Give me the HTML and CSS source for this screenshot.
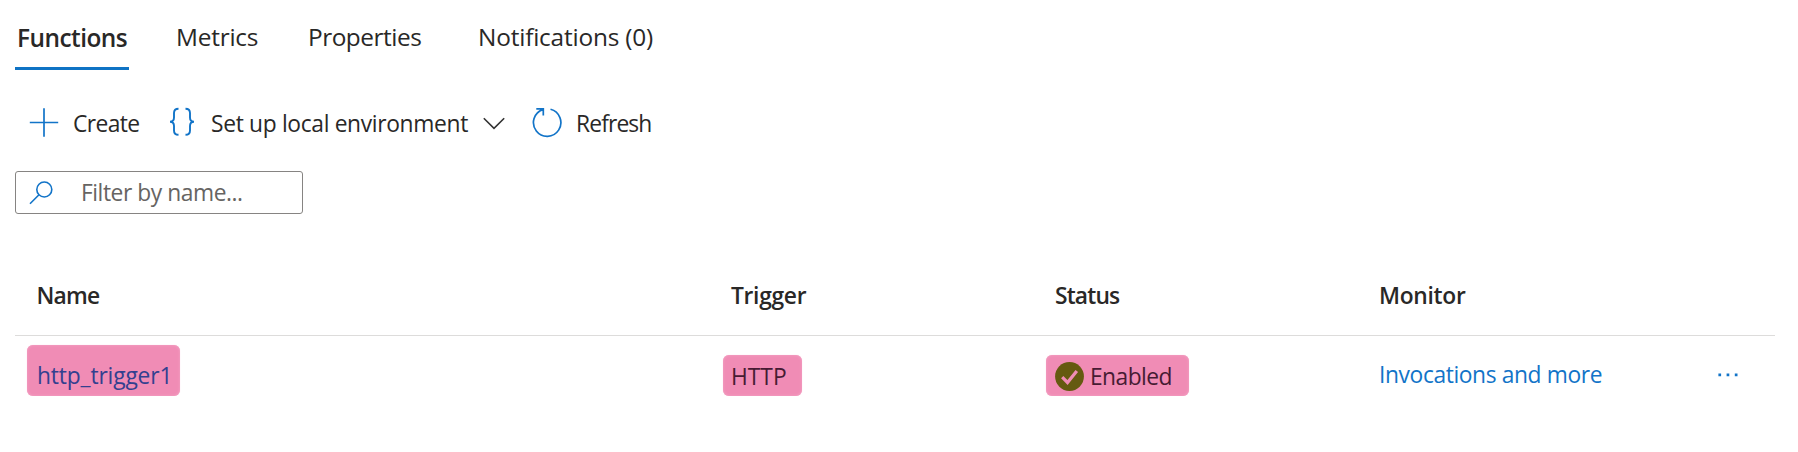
FILE: index.html
```
<!DOCTYPE html>
<html lang="en">
<head>
<meta charset="utf-8">
<title>Functions</title>
<link rel="stylesheet" href="styles.css">
</head>
<body>
<main class="page">
  <nav class="tabs">
    <a class="tab tab-active">Functions</a>
    <a class="tab tab-metrics">Metrics</a>
    <a class="tab tab-properties">Properties</a>
    <a class="tab tab-notifications">Notifications (0)</a>
  </nav>
  <div class="toolbar">
    <button class="command create">
      <svg class="icon" width="30" height="30" viewBox="0 0 30 30"><path d="M15 .3V28.700M.8 14.500H29.200" stroke-width="1.700"/></svg>
      <span>Create</span>
    </button>
    <button class="command setup">
      <svg class="icon" width="26" height="30" viewBox="0 0 26 30"><path d="M9.500 1.700C6 1.700 5 3.300 5 6v4.500C5 13 4 14.700 1 14.700c3 0 4 1.700 4 4.300v4.500c0 2.700 1 4.300 4.500 4.300M16.500 1.700C20 1.700 21 3.300 21 6v4.500c0 2.500 1 4.200 4 4.200-3 0-4 1.700-4 4.300v4.500c0 2.700-1 4.300-4.500 4.300" stroke-width="1.900"/></svg>
      <span>Set up local environment</span>
      <svg class="chevron" width="22" height="13" viewBox="0 0 22 13"><path d="M.8 1.200 11 11.300 21.200 1.200" stroke-width="1.600"/></svg>
    </button>
    <button class="command refresh">
      <svg class="icon" width="30" height="30" viewBox="0 0 30 30"><path d="M18.500 1.300A13.700 13.700 0 1 1 10.800 1.600M4.300 .9h7v6.600" stroke-width="1.700"/></svg>
      <span>Refresh</span>
    </button>
  </div>
  <div class="filter">
    <svg class="icon" width="24" height="24" viewBox="0 0 24 24"><circle cx="15.300" cy="8.500" r="7.500" stroke-width="1.600"/><path d="M10 13.800 1 22.800" stroke-width="1.600"/></svg>
    <span>Filter by name...</span>
  </div>
  <section class="table">
    <div class="row header">
      <div class="h-name">Name</div>
      <div class="h-trigger">Trigger</div>
      <div class="h-status">Status</div>
      <div class="h-monitor">Monitor</div>
    </div>
    <div class="row body">
      <div class="mark mark-name"><a>http_trigger1</a></div>
      <div class="mark mark-trigger">HTTP</div>
      <div class="mark mark-status">
        <svg width="29" height="29" viewBox="0 0 29 29"><circle cx="14.500" cy="14.500" r="14.400" fill="#655a10"/><path d="M7.200 15.200 12.500 20.500 21.800 9" fill="none" stroke="#f08cb5" stroke-width="3.200"/></svg>
        <span>Enabled</span>
      </div>
      <div class="monitor">
        <a>Invocations and more</a>
        <svg width="20" height="4" viewBox="0 0 20 4"><path d="M.4.500h2.700v2.700H.400zM8.600.500h2.700v2.700H8.600zM16.800.500h2.700v2.700h-2.700z" fill="#1274c8"/></svg>
      </div>
    </div>
  </section>
</main>
</body>
</html>
```
FILE: styles.css
```
body {
  margin: 0;
  background: #fff;
  color: #292827;
  font: 22.8px/30px "Open Sans", "Noto Sans", sans-serif;
}
.page { padding: 0 23px 0 15px; }
svg { flex: none; display: block; }
.icon { fill: none; stroke: #1274c8; }

.tabs { display: flex; height: 70px; font-size: 24.4px; }
.tab {
  box-sizing: border-box;
  height: 70px;
  padding-top: 22px;
  letter-spacing: -.23px;
  white-space: nowrap;
}
.tab-active {
  width: 114px;
  margin-right: 47px;
  padding-top: 23px;
  padding-left: 2px;
  border-bottom: 3px solid #0f73c4;
  font-weight: 600;
  letter-spacing: -.52px;
}
.tab-metrics { width: 132px; }
.tab-properties { width: 170px; letter-spacing: -.48px; }
.tab-notifications { letter-spacing: -.19px; }

.toolbar { display: flex; height: 40px; margin-top: 33px; padding-left: 14px; }
.command {
  display: flex;
  align-items: center;
  padding: 0;
  border: 0;
  background: none;
  color: inherit;
  font: inherit;
  white-space: nowrap;
}
.command span { padding-top: 2px; }
.create { width: 140px; letter-spacing: -.58px; gap: 14px; }
.setup { width: 363px; letter-spacing: -.33px; }
.setup .icon { margin: 0 16px 3px 0; }
.chevron { margin-left: auto; margin-right: 27px; fill: none; stroke: #333; }
.refresh { gap: 14px; letter-spacing: -.87px; }

.filter {
  box-sizing: border-box;
  display: flex;
  align-items: center;
  width: 288px;
  height: 43px;
  margin-top: 28px;
  padding-left: 13px;
  gap: 28px;
  border: 1px solid #868482;
  border-radius: 3px;
  color: #666462;
  letter-spacing: -.45px;
}
.filter span { padding-top: 1px; }

.table { margin-top: 41px; }
.row { display: grid; grid-template-columns: 708px 323px 324px 405px; }
.header {
  box-sizing: border-box;
  height: 81px;
  padding-top: 2px;
  align-items: center;
  border-bottom: 1px solid #dddcdb;
  font-weight: 600;
}
.h-name { padding-left: 21.5px; letter-spacing: -.75px; }
.h-trigger { padding-left: 8px; letter-spacing: -.3px; }
.h-status { padding-left: 9px; letter-spacing: -.85px; }
.h-monitor { padding-left: 9px; letter-spacing: -.3px; }

.body { height: 60px; align-items: end; }
.mark {
  box-sizing: border-box;
  height: 41px;
  padding: 7px 8px 4px;
  border-radius: 6px;
  background: #f08cb5;
  box-shadow: inset 0 0 3px #f4a8c7, 0 0 1px #f8c4d9;
  color: #461b33;
}
.mark-name {
  width: 153px;
  height: 51px;
  margin-left: 12px;
  padding: 16px 9px 5px 10px;
  color: #33408f;
  letter-spacing: -.15px;
}
.mark-trigger { width: 79px; letter-spacing: 0; }
.mark-status {
  display: flex;
  align-items: center;
  gap: 6px;
  width: 143px;
  padding: 5px 9px 4px;
  letter-spacing: -.55px;
}
.mark-status span { padding-top: 2px; }
.monitor {
  display: flex;
  align-items: center;
  justify-content: space-between;
  padding: 0 37px 6px 9px;
  color: #1274c8;
  letter-spacing: -.39px;
}
```
